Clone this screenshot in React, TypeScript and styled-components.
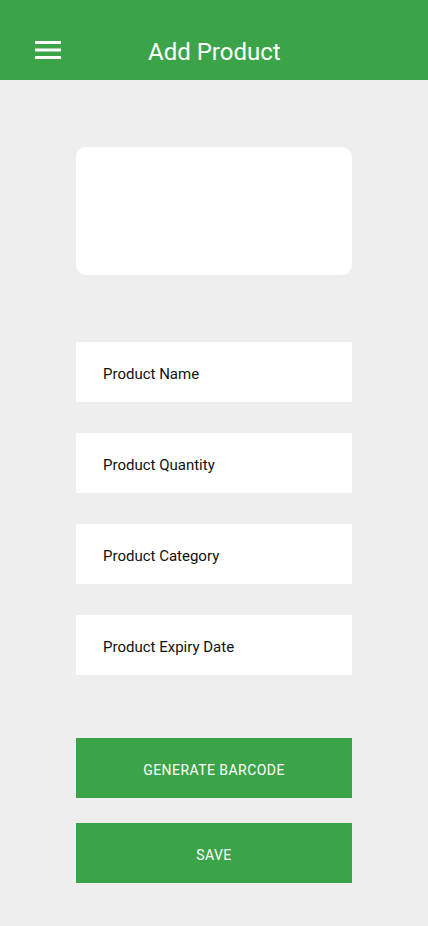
import React from "react";
import styled, { createGlobalStyle } from "styled-components";

const GREEN = "#3ba449";

const Global = createGlobalStyle`
  html, body { margin: 0; padding: 0; background: #eeeeee; }
  body { font-family: Roboto, "Liberation Sans", Arial, sans-serif; }
  * { box-sizing: border-box; }
`;

const Page = styled.div`
  min-height: 926px;
  background: #eeeeee;
  display: flex;
  flex-direction: column;
`;

const Header = styled.header`
  height: 80px;
  background: ${GREEN};
  display: flex;
  align-items: center;
  padding: 20px 0 0 35px;
`;

const MenuButton = styled.button`
  width: 26px;
  height: 18px;
  padding: 0;
  border: none;
  background: transparent;
  display: flex;
  cursor: pointer;
`;

const Title = styled.h1`
  margin: 4px 0 0 87px;
  font-size: 24px;
  font-weight: 400;
  color: #ffffff;
  line-height: 28px;
`;

const Main = styled.main`
  display: flex;
  flex-direction: column;
  align-items: center;
  padding-top: 67px;
`;

const ImageCard = styled.div`
  width: 276px;
  height: 128px;
  background: #ffffff;
  border-radius: 10px;
`;

const Fields = styled.div`
  display: flex;
  flex-direction: column;
  gap: 31px;
  margin-top: 67px;
`;

const Field = styled.input`
  width: 276px;
  height: 60px;
  border: none;
  background: #ffffff;
  padding: 4px 0 0 27px;
  font-family: Roboto, "Liberation Sans", Arial, sans-serif;
  font-size: 15px;
  color: #111111;
  outline: none;
  &::placeholder { color: #111111; opacity: 1; }
`;

const Actions = styled.div`
  display: flex;
  flex-direction: column;
  gap: 25px;
  margin-top: 63px;
`;

const ActionButton = styled.button`
  width: 276px;
  height: 60px;
  border: none;
  padding: 4px 0 0;
  background: ${GREEN};
  color: #ffffff;
  font-family: Roboto, "Liberation Sans", Arial, sans-serif;
  font-size: 14px;
  text-transform: uppercase;
  letter-spacing: 0.45px;
  cursor: pointer;
`;

export default function App() {
  return (
    <Page>
      <Global />
      <Header>
        <MenuButton aria-label="menu">
          <svg width="26" height="18" viewBox="0 0 26 18">
            <rect x="0" y="0" width="26" height="3" fill="#fff" />
            <rect x="0" y="7.5" width="26" height="3" fill="#fff" />
            <rect x="0" y="15" width="26" height="3" fill="#fff" />
          </svg>
        </MenuButton>
        <Title>Add Product</Title>
      </Header>
      <Main>
        <ImageCard />
        <Fields>
          <Field placeholder="Product Name" />
          <Field placeholder="Product Quantity" />
          <Field placeholder="Product Category" />
          <Field placeholder="Product Expiry Date" />
        </Fields>
        <Actions>
          <ActionButton>Generate Barcode</ActionButton>
          <ActionButton>Save</ActionButton>
        </Actions>
      </Main>
    </Page>
  );
}
